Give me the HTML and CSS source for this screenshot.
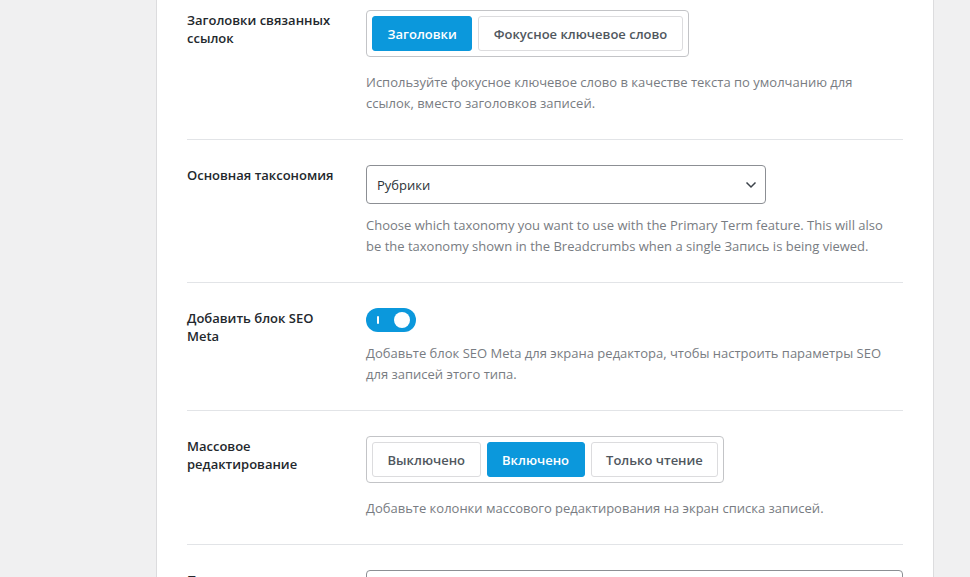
FILE: index.html
```html
<!DOCTYPE html>
<html lang="ru">
<head>
<meta charset="utf-8">
<title>Настройки</title>
<link rel="stylesheet" href="styles.css">
</head>
<body>
<div class="page">
  <div class="panel">
    <div class="row row-first">
      <div class="label">Заголовки связанных ссылок</div>
      <div class="field">
        <div class="group">
          <button class="btn active">Заголовки</button>
          <button class="btn">Фокусное ключевое слово</button>
        </div>
        <p class="desc">Используйте фокусное ключевое слово в качестве текста по умолчанию для ссылок, вместо заголовков записей.</p>
      </div>
    </div>
    <div class="row">
      <div class="label">Основная таксономия</div>
      <div class="field">
        <div class="select">
          <span>Рубрики</span>
          <svg class="chev" width="12" height="8" viewBox="0 0 12 8"><path d="M1.5 1.5 L6 6 L10.5 1.5" fill="none" stroke="#3c434a" stroke-width="1.5"/></svg>
        </div>
        <p class="desc">Choose which taxonomy you want to use with the Primary Term feature. This will also be the taxonomy shown in the Breadcrumbs when a single Запись is being viewed.</p>
      </div>
    </div>
    <div class="row">
      <div class="label">Добавить блок SEO Meta</div>
      <div class="field">
        <div class="toggle"><span class="bar"></span><span class="knob"></span></div>
        <p class="desc">Добавьте блок SEO Meta для экрана редактора, чтобы настроить параметры SEO для записей этого типа.</p>
      </div>
    </div>
    <div class="row">
      <div class="label">Массовое редактирование</div>
      <div class="field">
        <div class="group">
          <button class="btn">Выключено</button>
          <button class="btn active">Включено</button>
          <button class="btn">Только чтение</button>
        </div>
        <p class="desc">Добавьте колонки массового редактирования на экран списка записей.</p>
      </div>
    </div>
    <div class="row">
      <div class="label">Пользовательские поля</div>
      <div class="field">
        <div class="input"></div>
      </div>
    </div>
  </div>
</div>
</body>
</html>
```

FILE: styles.css
```css
html, body {
  margin: 0;
  padding: 0;
  background: #f0f0f1;
  font-family: "Open Sans", "Noto Sans", sans-serif;
  font-size: 13px;
  color: #1d2327;
  overflow: hidden;
  height: 577px;
}
.page {
  padding-left: 156px;
}
.panel {
  width: 778px;
  min-height: 700px;
  box-sizing: border-box;
  background: #fff;
  border-left: 1px solid #dcdcde;
  border-right: 1px solid #dcdcde;
  padding: 0 30px;
}
.row {
  display: flex;
  gap: 19px;
  padding: 25px 0;
  border-top: 1px solid #e2e4e7;
}
.row-first {
  border-top: none;
  padding-top: 10px;
}
.label {
  flex: 0 0 160px;
  font-weight: 600;
  line-height: 18px;
  padding-top: 1px;
  color: #23282d;
}
.field {
  flex: 1;
  min-width: 0;
}
.group {
  display: inline-flex;
  gap: 6px;
  padding: 5px;
  border: 1px solid #c3c4c7;
  border-radius: 4px;
  margin-bottom: 4px;
}
.btn {
  height: 35px;
  padding: 0 14.5px;
  border: 1px solid #dcdcde;
  border-radius: 3px;
  background: #fff;
  font-family: inherit;
  font-size: 13px;
  font-weight: 600;
  color: #50575e;
}
.btn.active {
  background: #0b98dc;
  border-color: #0b98dc;
  color: #fff;
}
.desc {
  margin: 11px 0 0;
  max-width: 530px;
  color: #787c82;
  line-height: 21px;
}
.select {
  width: 400px;
  height: 39px;
  box-sizing: border-box;
  border: 1px solid #8c8f94;
  border-radius: 4px;
  display: flex;
  align-items: center;
  justify-content: space-between;
  padding: 0 8px 0 10px;
  color: #2c3338;
}
.toggle {
  position: relative;
  width: 50px;
  height: 24px;
  border-radius: 12px;
  background: #0b98dc;
}
.toggle .bar {
  position: absolute;
  left: 11px;
  top: 8px;
  width: 2px;
  height: 8px;
  background: #fff;
  border-radius: 1px;
}
.toggle .knob {
  position: absolute;
  right: 6px;
  top: 4px;
  width: 16px;
  height: 16px;
  border-radius: 50%;
  background: #fff;
}
.input {
  height: 36px;
  border: 1px solid #8c8f94;
  border-radius: 4px;
}
```
